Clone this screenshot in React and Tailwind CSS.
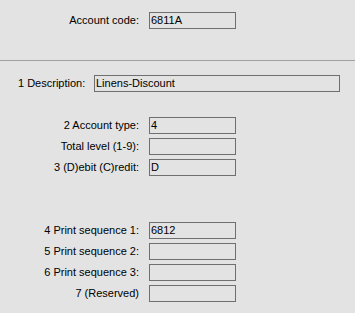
import React from "react";

function Field({ value = "", w = "w-[87px]" }) {
  return (
    <div
      className={`${w} h-[17px] border border-[#6f6f6f] bg-[#e3e3e3] pl-[1px] flex items-center text-[11px] leading-none text-black`}
    >
      {value}
    </div>
  );
}

function Row({ label, value, className = "" }) {
  return (
    <div className={`flex items-center ${className}`}>
      <div className="w-[139px] text-right text-[11px] leading-none text-black whitespace-nowrap">
        {label}
      </div>
      <div className="ml-[10px]">
        <Field value={value} />
      </div>
    </div>
  );
}

export default function App() {
  return (
    <div
      className="w-[355px] h-[313px] bg-[#e3e3e3] overflow-hidden"
      style={{ fontFamily: '"Liberation Sans", Arial, sans-serif' }}
    >
      <div className="pt-[12px]">
        <Row label="Account code:" value="6811A" />
      </div>
      <div className="mt-[31px] h-[1px] bg-[#a0a0a0]" />
      <div className="mt-[14px] flex items-center">
        <div className="pl-[18px] w-[94px] text-[11px] leading-none text-black whitespace-nowrap">
          1 Description:
        </div>
        <Field value="Linens-Discount" w="w-[246px]" />
      </div>
      <div className="mt-[25px] flex flex-col gap-[4px]">
        <Row label="2 Account type:" value="4" />
        <Row label="Total level (1-9):" value="" />
        <Row label="3 (D)ebit (C)redit:" value="D" />
      </div>
      <div className="mt-[46px] flex flex-col gap-[4px]">
        <Row label="4 Print sequence 1:" value="6812" />
        <Row label="5 Print sequence 2:" value="" />
        <Row label="6 Print sequence 3:" value="" />
        <Row label="7 (Reserved)" value="" />
      </div>
    </div>
  );
}
